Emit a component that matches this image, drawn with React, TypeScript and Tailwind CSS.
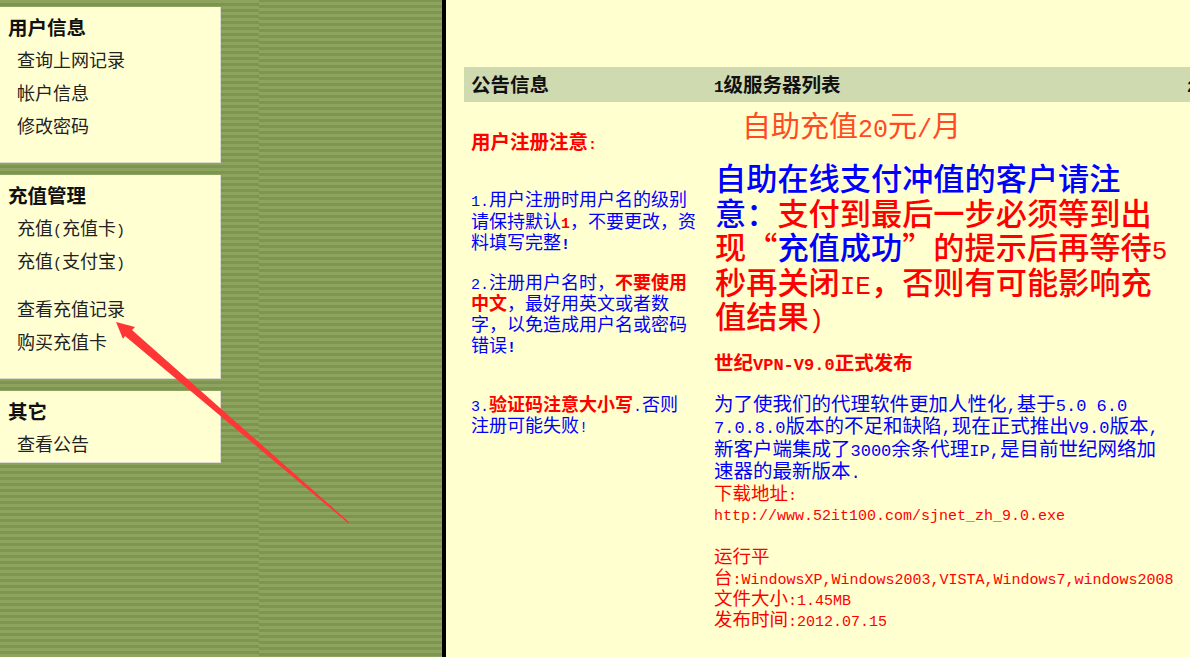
const cjk = "[font-family:'Liberation_Mono','Noto_Sans_CJK_SC',monospace]";

function SideCard({ title, items, height }: { title: string; items: { label: React.ReactNode; gap?: boolean }[]; height: string }) {
  return (
    <div className={`w-[221px] ${height} bg-[#ffffd2] border-r border-b border-[#dcdccc] pl-2 pt-[13px] shrink-0`}>
      <h3 className="h-[20px] text-[19.5px] leading-[20px] font-bold text-[#111]">{title}</h3>
      <ul className="grid auto-rows-[33px] pl-[9px] pt-[6px]">
        {items.map((item, i) => (
          <li key={i} className={`text-[18px] leading-[33px] text-[#222] ${item.gap ? 'mt-[15px] h-[33px]' : ''}`}>
            {item.label}
          </li>
        ))}
      </ul>
    </div>
  );
}

export default function App() {
  return (
    <div className={`relative flex h-screen w-full overflow-hidden bg-[#ffffcf] ${cjk}`}>
      {/* sidebar frame */}
      <aside className="flex w-[446px] shrink-0 border-r-4 border-black">
        <div className="flex w-[259px] shrink-0 flex-col gap-3 pt-[7px] bg-[repeating-linear-gradient(180deg,#8ca45d_0px,#8ca45d_3px,#7e9552_3px,#7e9552_6px)]">
          <SideCard
            title="用户信息"
            height="h-[156px]"
            items={[{ label: '查询上网记录' }, { label: '帐户信息' }, { label: '修改密码' }]}
          />
          <SideCard
            title="充值管理"
            height="h-[204px]"
            items={[
              { label: <>充值<span className="text-[15px]">(</span>充值卡<span className="text-[15px]">)</span></> },
              { label: <>充值<span className="text-[15px]">(</span>支付宝<span className="text-[15px]">)</span></> },
              { label: '查看充值记录', gap: true },
              { label: '购买充值卡', gap: true },
            ]}
          />
          <SideCard title="其它" height="h-[72px]" items={[{ label: '查看公告' }]} />
        </div>
        <div className="flex-1 bg-[repeating-linear-gradient(180deg,#7e9552_0px,#7e9552_2px,#8ca45d_2px,#8ca45d_5px,#7e9552_5px,#7e9552_6px)]" />
      </aside>

      <main className="min-w-0 flex-1 pl-[18px] pt-[67px]">
        <div className="flex h-[35px] w-[900px] bg-[#cfdab0] pt-[5px] text-[19.5px] leading-[30px] font-bold text-[#111]">
          <div className="w-[242px] shrink-0 pl-[7px]">公告信息</div>
          <div className="w-[481px] shrink-0 pl-2"><span className="text-[16px]">1</span>级服务器列表</div>
          <div><span className="text-[16px]">2</span></div>
        </div>

        <div className="flex">
          {/* notice column */}
          <div className="w-[242px] shrink-0 pl-[7px] pr-2">
            <p className="mt-[30px] h-[24px] text-[19.5px] leading-[24px] font-bold text-[#ff0000]">用户注册注意<span className="text-[15px]">:</span></p>
            <div className="grid auto-rows-[21.5px] pt-[35px] text-[18px] leading-[21.5px] text-[#0000ff]">
              <p><span className="text-[15px]">1.</span>用户注册时用户名的级别</p>
              <p>请保持默认<b className="text-[#ff0000]"><span className="text-[15px]">1</span></b>，不要更改，资</p>
              <p>料填写完整<b className="text-[15px]">!</b></p>
            </div>
            <div className="grid auto-rows-[21px] pt-[18px] text-[18px] leading-[21px] text-[#0000ff]">
              <p><span className="text-[15px]">2.</span>注册用户名时，<b className="text-[#ff0000]">不要使用</b></p>
              <p><b className="text-[#ff0000]">中文</b>，最好用英文或者数</p>
              <p>字，以免造成用户名或密码</p>
              <p>错误<b className="text-[15px]">!</b></p>
            </div>
            <div className="grid auto-rows-[21.5px] pt-[38px] text-[18px] leading-[21.5px] text-[#0000ff]">
              <p><span className="text-[15px]">3.</span><b className="text-[#ff0000]">验证码注意大小写</b><span className="text-[15px]">.</span>否则</p>
              <p>注册可能失败<span className="text-[15px]">!</span></p>
            </div>
          </div>

          {/* server column */}
          <div className="w-[480px] shrink-0 whitespace-nowrap pl-2">
            <p className="mt-[9px] h-[38px] pl-[28px] text-[29px] leading-[38px] text-[#ff4a24]">
              自助充值<span className="text-[25px]">20</span>元<span className="text-[25px]">/</span>月
            </p>
            <div className="grid auto-rows-[34.5px] pt-[11px] pl-[1px] text-[31.2px] leading-[34.5px] font-medium text-[#ff0000] [font-family:'Noto_Sans_CJK_SC',sans-serif]">
              <p className="text-[#0000ff]">自助在线支付冲值的客户请注</p>
              <p><span className="text-[#0000ff]">意：</span>支付到最后一步必须等到出</p>
              <p>现“<span className="text-[#0000ff]">充值成功</span>”的提示后再等待<span className={`text-[26px] ${cjk}`}>5</span></p>
              <p>秒再关闭<span className={`text-[26px] ${cjk}`}>IE</span>，否则有可能影响充</p>
              <p>值结果<span className={`text-[26px] ${cjk}`}>)</span></p>
            </div>
            <p className="mt-[20px] h-[24px] text-[19.5px] leading-[24px] font-bold text-[#ff0000]">
              世纪<span className="text-[17px]">VPN-V9.0</span>正式发布
            </p>
            <div className="grid auto-rows-[22.6px] pt-[18px] text-[19.5px] leading-[22.6px] text-[#0000ff]">
              <p>为了使我们的代理软件更加人性化<span className="text-[17px]">,</span>基于<span className="text-[17px]">5.0 6.0</span></p>
              <p><span className="text-[17px]">7.0.8.0</span>版本的不足和缺陷<span className="text-[17px]">,</span>现在正式推出<span className="text-[17px]">V9.0</span>版本<span className="text-[17px]">,</span></p>
              <p>新客户端集成了<span className="text-[17px]">3000</span>余条代理<span className="text-[17px]">IP,</span>是目前世纪网络加</p>
              <p>速器的最新版本<span className="text-[17px]">.</span></p>
            </div>
            <div className="grid auto-rows-[21px] text-[18.5px] leading-[21px] text-[#ff0000]">
              <p>下载地址<span className="text-[15px]">:</span></p>
              <p className="text-[15px]">http://www.52it100.com/sjnet_zh_9.0.exe</p>
              <p className="h-[22px]">&nbsp;</p>
              <p>运行平</p>
              <p>台<span className="text-[15px]">:WindowsXP,Windows2003,VISTA,Windows7,windows2008</span></p>
              <p>文件大小<span className="text-[15px]">:1.45MB</span></p>
              <p>发布时间<span className="text-[15px]">:2012.07.15</span></p>
            </div>
          </div>
        </div>
      </main>

      {/* red annotation arrow over the page */}
      <svg className="pointer-events-none absolute left-0 top-0" width="446" height="657" viewBox="0 0 446 657">
        <polygon points="116,322 135,327 132,330 349,522 348,523 125,336 123,339" fill="#ff3636" />
      </svg>
    </div>
  );
}
